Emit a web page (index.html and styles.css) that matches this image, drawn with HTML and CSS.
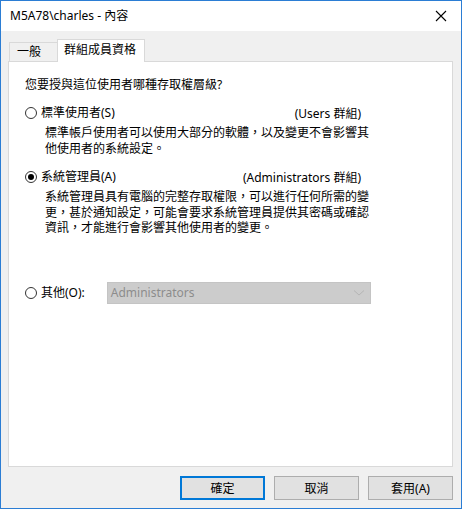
FILE: index.html
```html
<!DOCTYPE html>
<html lang="zh-Hant">
<head>
  <meta charset="UTF-8">
  <title>M5A78\charles - 內容</title>
  <link rel="stylesheet" href="styles.css">
</head>
<body>
  <div class="window">
    <div class="titlebar">
      <span class="title">M5A78\charles - 內容</span>
      <svg class="close" width="12" height="12" viewBox="0 0 12 12">
        <path d="M1 1 L11 11 M11 1 L1 11" stroke="#000" stroke-width="1.1" fill="none"/>
      </svg>
    </div>

    <div class="content">
      <div class="tabs">
        <div class="tab">一般</div>
        <div class="tab active">群組成員資格</div>
      </div>

      <div class="panel">
        <div class="question">您要授與這位使用者哪種存取權層級?</div>

        <div class="option first">
          <span class="radio"></span>
          <span class="label">標準使用者(S)</span>
          <span class="group">(Users 群組)</span>
        </div>
        <div class="desc">標準帳戶使用者可以使用大部分的軟體，以及變更不會影響其<br>他使用者的系統設定。</div>

        <div class="option second">
          <span class="radio checked"></span>
          <span class="label">系統管理員(A)</span>
          <span class="group">(Administrators 群組)</span>
        </div>
        <div class="desc">系統管理員具有電腦的完整存取權限，可以進行任何所需的變<br>更，甚於通知設定，可能會要求系統管理員提供其密碼或確認<br>資訊，才能進行會影響其他使用者的變更。</div>

        <div class="other">
          <span class="radio"></span>
          <span class="label">其他(O):</span>
          <div class="combo">
            <span>Administrators</span>
            <svg width="12" height="8" viewBox="0 0 12 8">
              <path d="M1 1.5 L6 6 L11 1.5" stroke="#b5b5b5" stroke-width="1" fill="none"/>
            </svg>
          </div>
        </div>
      </div>

      <div class="buttons">
        <button class="default">確定</button>
        <button>取消</button>
        <button>套用(A)</button>
      </div>
    </div>
  </div>
</body>
</html>
```

FILE: styles.css
```css
body {
  margin: 0;
  background-color: #fff;
  font-family: "Noto Sans", "Noto Sans CJK TC", sans-serif;
  font-size: 12px;
  color: #000;
}

.window {
  width: 462px;
  height: 509px;
  box-sizing: border-box;
  border: 1px solid #2b7dd4;
  background-color: #f0f0f0;
  display: flex;
  flex-direction: column;
}

.titlebar {
  height: 30px;
  background-color: #fff;
  display: flex;
  align-items: center;
  justify-content: space-between;
  padding: 0 14px 0 9px;
}

.title {
  font-size: 12px;
  line-height: 16px;
}

.content {
  padding: 8px 8px 8px 7px;
  display: flex;
  flex-direction: column;
}

.tabs {
  display: flex;
  align-items: flex-end;
  height: 22px;
  padding-left: 1px;
}

.tab {
  height: 19px;
  width: 48px;
  box-sizing: border-box;
  border: 1px solid #d9d9d9;
  border-right: none;
  border-bottom: none;
  background-color: #f0f0f0;
  padding-left: 7px;
  line-height: 18px;
}

.tab.active {
  position: relative;
  z-index: 1;
  height: 23px;
  width: 88px;
  margin-bottom: -1px;
  border-right: 1px solid #d9d9d9;
  background-color: #fff;
  padding-left: 6px;
  line-height: 20px;
}

.panel {
  height: 406px;
  box-sizing: border-box;
  border: 1px solid #d9d9d9;
  background-color: #fff;
  padding: 15px 0 0 16px;
}

.question {
  line-height: 16px;
}

.option {
  display: flex;
  align-items: center;
  width: 336px;
  height: 16px;
}

.option.first {
  margin-top: 12px;
}

.option.second {
  margin-top: 13px;
}

.label {
  margin-left: 4px;
  line-height: 16px;
}

.group {
  margin-left: auto;
}

.radio {
  width: 12px;
  height: 12px;
  box-sizing: border-box;
  border: 1px solid #333;
  border-radius: 50%;
  background-color: #fff;
  display: flex;
  align-items: center;
  justify-content: center;
  flex-shrink: 0;
}

.radio.checked::after {
  content: "";
  width: 6px;
  height: 6px;
  border-radius: 50%;
  background-color: #000;
}

.desc {
  margin: 4px 0 0 20px;
  line-height: 15.5px;
}

.other {
  display: flex;
  align-items: center;
  margin-top: 46px;
  height: 22px;
}

.combo {
  margin-left: 22px;
  width: 264px;
  height: 22px;
  box-sizing: border-box;
  border: 1px solid #c4c4c4;
  background-color: #cccccc;
  color: #8c8c8c;
  display: flex;
  align-items: center;
  justify-content: space-between;
  padding: 0 5px 0 3px;
}

.buttons {
  display: flex;
  justify-content: flex-end;
  gap: 9px;
  margin-top: 9px;
}

.buttons button {
  width: 85px;
  height: 24px;
  box-sizing: border-box;
  border: 1px solid #adadad;
  background-color: #e1e1e1;
  font-family: "Noto Sans", "Noto Sans CJK TC", sans-serif;
  font-size: 12px;
  color: #000;
  padding: 0;
}

.buttons button.default {
  border: 2px solid #0078d7;
}
```
